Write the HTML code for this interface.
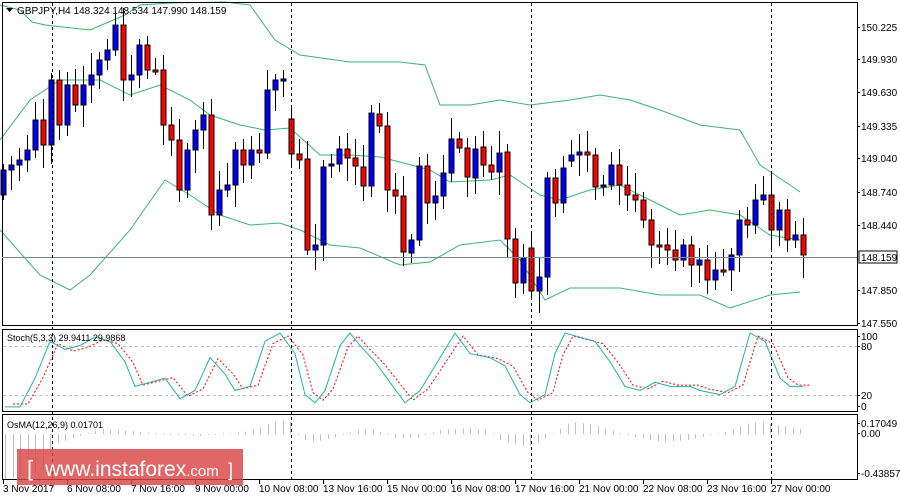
<!DOCTYPE html>
<html><head><meta charset="utf-8"><style>
html,body{margin:0;padding:0;background:#fff;width:900px;height:500px;overflow:hidden;font-family:"Liberation Sans",sans-serif}
svg{position:absolute;left:0;top:0}
text{font-family:"Liberation Sans",sans-serif;font-size:10px;fill:#000}
</style></head><body>
<svg id="s" width="900" height="500" xmlns="http://www.w3.org/2000/svg">
<rect x="0" y="0" width="900" height="500" fill="#fff"/>
<g id="grid"></g>
<g id="bands" fill="none" stroke="#3cb371" stroke-width="1"></g>
<g id="candles"></g>
<g id="stoch"></g>
<g id="osma"></g>
<rect x="2.5" y="2.5" width="855" height="323" fill="none" stroke="#000"/>
<rect x="2.5" y="329.5" width="855" height="82" fill="none" stroke="#000"/>
<rect x="2.5" y="414.5" width="855" height="65" fill="none" stroke="#000"/>
<line x1="2" y1="257.5" x2="857" y2="257.5" stroke="#778899"/>
<g id="vdash" stroke="#000" stroke-dasharray="3,3"></g>
<path d="M6 8 L13 8 L9.5 12 Z" fill="#000"/>
<text x="17" y="14">GBPJPY,H4  148.324 148.534 147.990 148.159</text>
<text x="7" y="341" style="font-size:9px">Stoch(5,3,3) 29.9411 29.9868</text>
<text x="7" y="428" style="font-size:9px">OsMA(12,26,9) 0.01701</text>
<g id="axis"></g>
<rect x="859" y="251" width="38" height="12" fill="#fff" stroke="#000"/>
<text x="861" y="261">148.159</text>
<rect x="17" y="449" width="226" height="36" fill="#d94446" opacity="0.82"/>
<text x="27" y="476" style="font-size:22px;fill:#fff">[</text>
<text x="45" y="476" style="font-size:21px;fill:#fff">www.instaforex<tspan style="font-size:15px">.com</tspan></text>
<text x="228" y="476" style="font-size:18px;fill:#fff">]</text>
</svg>
<script>
var NS="http://www.w3.org/2000/svg";
function el(p,t,a){var e=document.createElementNS(NS,t);for(var k in a)e.setAttribute(k,a[k]);document.getElementById(p).appendChild(e);return e;}
[52,291,531,771].forEach(function(x){el("vdash","line",{x1:x+.5,y1:3,x2:x+.5,y2:480});});
el("grid","line",{x1:3,y1:346.5,x2:857,y2:346.5,stroke:"#bbb","stroke-dasharray":"3,3"});
el("grid","line",{x1:3,y1:395.5,x2:857,y2:395.5,stroke:"#bbb","stroke-dasharray":"3,3"});
function pl(p,pts,attrs){attrs=attrs||{};attrs.points=pts.map(function(q){return q.join(",")}).join(" ");el(p,"polyline",attrs);}
pl("bands",[[0,5],[20,10],[32,22],[45,25],[90,30],[125,15],[140,5],[170,3],[225,2],[250,5],[275,40],[300,55],[350,62],[400,62],[425,65],[440,105],[470,105],[500,100],[530,105],[570,100],[600,95],[630,100],[660,110],[700,125],[740,130],[760,165],[790,185],[800,192]]);
pl("bands",[[0,140],[30,100],[60,80],[100,80],[130,95],[160,85],[190,100],[210,115],[240,125],[265,130],[290,128],[320,155],[350,155],[380,157],[400,162],[430,170],[450,182],[470,181],[490,180],[510,175],[540,195],[560,200],[590,190],[620,185],[650,200],[680,215],[710,210],[740,215],[770,235],[800,240]]);
pl("bands",[[0,230],[40,275],[70,290],[90,275],[130,230],[165,180],[190,195],[220,215],[250,225],[280,223],[300,230],[330,245],[360,248],[400,265],[430,262],[460,245],[500,240],[520,260],[545,300],[570,288],[620,288],[660,295],[700,295],[730,308],[770,295],[800,292]]);
var C=[[195,170],[170,165],[165,160],[160,150],[150,120],[120,145],[145,80],[80,125],[125,85],[85,105],[105,85],[85,75],[75,60],[60,50],[50,25],[25,80],[80,75],[75,45],[45,70],[70,70],[70,125],[125,140],[140,190],[190,150],[150,130],[130,115],[115,215],[215,190],[190,185],[185,150],[150,165],[165,150],[150,153],[153,90],[90,80],[80,79],
[119,154],[154,160],[159,250],[250,245],[245,167],[166,164],[164,149],[149,158],[158,166],[167,186],[186,113],[114,126],[126,190],[190,196],[196,252],[253,240],[240,166],[166,203],[203,196],[196,173],[173,139],[139,148],[148,177],[178,149],[147,165],[165,172],[172,153],[152,239],[239,283],[283,258],[248,291],[291,277],[277,178],[178,203],[203,168],[161,155],
[155,152],[152,155],[155,187],[187,185],[185,165],[165,185],[185,195],[195,200],[200,220],[220,245],[245,245],[245,250],[250,260],[260,245],[245,265],[265,260],[260,280],[280,270],[270,270],[270,255],[255,220],[220,225],[225,200],[200,195],[195,230],[230,210],[210,240],[240,235],[235,255]];
for(var i=0;i<C.length;i++){
 var x,o=C[i][0],c=C[i][1];
 if(i>=36)x=291+(i-36)*8; else x=291-(36-i)*8;
 var hi=Math.min(o,c)-(6+((i*37)%17)),lo=Math.max(o,c)+(5+((i*53)%19));
 el("candles","line",{x1:x+.5,y1:hi,x2:x+.5,y2:lo,stroke:"#000"});
 var t=Math.min(o,c),h=Math.max(2,Math.abs(o-c));
 el("candles","rect",{x:x-2,y:t,width:5,height:h,fill:c<o?"#0000ff":"#ff0000",stroke:"#000","stroke-width":1});
}
function sy(v){return 411-v*0.82;}
var S=[[5,5],[20,5],[35,40],[50,85],[65,75],[80,80],[95,90],[110,85],[125,60],[135,30],[150,35],[165,40],[180,15],[195,25],[210,65],[225,45],[235,25],[250,30],[265,85],[280,95],[295,70],[305,20],[315,10],[325,25],[340,80],[350,95],[360,80],[375,60],[390,35],[405,10],[420,25],[440,65],[455,95],[470,70],[490,65],[505,55],[520,20],[530,10],[545,20],[555,70],[565,95],[580,90],[595,85],[610,60],[625,30],[640,25],[655,35],[670,30],[690,30],[700,25],[720,20],[735,30],[750,95],[765,85],[780,40],[790,30],[803,30]];
pl("stoch",S.map(function(p){return [p[0]+8,sy(p[1]*0.92+4)]}),{fill:"none",stroke:"#ff0000","stroke-dasharray":"2,2"});
pl("stoch",S.map(function(p){return [p[0],sy(p[1])]}),{fill:"none",stroke:"#20b2aa"});
var z=434;
var K=[[5,-45],[40,-40],[55,-10],[70,-5],[100,5],[130,3],[160,0],[200,-2],[250,3],[280,14],[291,12],[300,-5],[315,-8],[340,-2],[360,5],[375,4],[395,-4],[420,-3],[440,4],[470,6],[490,3],[500,-6],[515,-10],[525,-13],[540,-8],[555,2],[570,12],[590,10],[610,4],[630,-2],[660,-8],[690,-6],[710,-1],[730,3],[745,10],[760,12],[800,5]];
function kv(x){for(var j=0;j<K.length-1;j++){if(x>=K[j][0]&&x<=K[j+1][0]){var f=(x-K[j][0])/(K[j+1][0]-K[j][0]);return K[j][1]+f*(K[j+1][1]-K[j][1]);}}return 0;}
for(var x=5;x<=805;x+=7.5){
 var v=kv(x); if(Math.abs(v)<1)v=v<0?-1:1;
 var xx=Math.round(x)+.5;
 el("osma","line",{x1:xx,y1:z,x2:xx,y2:z-v,stroke:"#c0c0c0"});
}
[["150.225",27],["149.930",59],["149.630",92],["149.335",126],["149.040",158],["148.740",192],["148.440",225],["147.850",290],["147.550",323],["100",336],["80",346],["20",395],["0",406],["0.17049",423],["0.00",433],["-0.43857",473]].forEach(function(a){
 var t=el("axis","text",{x:861,y:a[1]+4});t.textContent=a[0];
 el("axis","line",{x1:857,y1:a[1]+.5,x2:860,y2:a[1]+.5,stroke:"#000"});
});
var L=["3 Nov 2017","6 Nov 08:00","7 Nov 16:00","9 Nov 00:00","10 Nov 08:00","13 Nov 16:00","15 Nov 00:00","16 Nov 08:00","17 Nov 16:00","21 Nov 00:00","22 Nov 08:00","23 Nov 16:00","27 Nov 00:00"];
L.forEach(function(s,i){var x=3+i*64;var t=el("axis","text",{x:x,y:492});t.textContent=s;el("axis","line",{x1:x+.5,y1:480,x2:x+.5,y2:484,stroke:"#000"});});
</script>
</body></html>
